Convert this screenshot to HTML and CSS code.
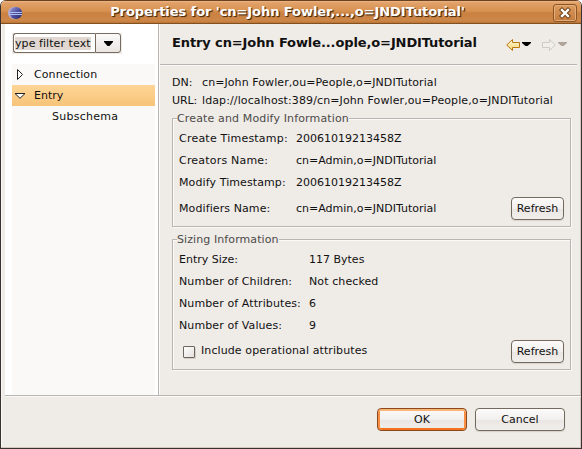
FILE: index.html
```html
<!DOCTYPE html>
<html lang="en">
<head>
<meta charset="utf-8">
<title>Properties</title>
<link rel="stylesheet" href="styles.css">
</head>
<body>
<div class="window">
  <header class="titlebar">
    <svg class="app-icon" width="16" height="16" viewBox="0 0 16 16">
      <defs>
        <linearGradient id="ball" x1="0" y1="0" x2="1" y2="1"><stop offset="0" stop-color="#9a9ad6"/><stop offset=".5" stop-color="#5050a0"/><stop offset="1" stop-color="#292463"/></linearGradient>
      </defs>
      <ellipse cx="7.500" cy="8" rx="6.700" ry="6.200" fill="#b9a6c4"/>
      <ellipse cx="9" cy="8" rx="6.200" ry="6" fill="url(#ball)"/>
      <path d="M2 7.500h13M2 9.500h13" stroke="#a9c0f0"/>
    </svg>
    <h1 class="title">Properties for 'cn=John Fowler,...,o=JNDITutorial'</h1>
    <button class="close" aria-label="Close">
      <svg width="22" height="16" viewBox="0 0 22 16"><path d="M8 5l6 6M14 5l-6 6" stroke="#6d3f16" stroke-width="4.4" stroke-linecap="square"/><path d="M8 5l6 6M14 5l-6 6" stroke="#fff" stroke-width="2.4" stroke-linecap="square"/></svg>
    </button>
  </header>
  <div class="main">
    <aside class="side">
      <div class="combo">
        <div class="entry"><span class="sel">ype filter text</span></div>
        <button class="drop" aria-label="Open"><svg width="9" height="5" viewBox="0 0 9 5"><path d="M0 0h9v1L5.500 5h-2L0 1z"/></svg></button>
      </div>
      <nav class="tree">
        <div class="node"><svg class="exp" width="12" height="14" viewBox="0 0 12 14"><path d="M3.500 1.500v10L8.500 6.500z" fill="#fff" stroke="#222"/></svg><span class="t-conn">Connection</span></div>
        <div class="node on"><svg class="exp" width="12" height="14" viewBox="0 0 12 14"><path d="M1 4.500h10L6 9.300z" fill="#fff" stroke="#222"/></svg><span>Entry</span></div>
        <div class="node child"><span class="t-sub">Subschema</span></div>
      </nav>
    </aside>
    <section class="page">
      <div class="head">
        <h2 class="head-title">Entry cn=John Fowle...ople,o=JNDITutorial</h2>
        <svg class="arrows" width="64" height="14" viewBox="0 0 64 14">
          <defs><linearGradient id="gold" x1="0" y1="0" x2="0" y2="1"><stop offset="0" stop-color="#fffbe0"/><stop offset="1" stop-color="#f5d36a"/></linearGradient></defs>
          <path d="M.7 7L6.500 1.500v3h7v5h-7v3z" fill="url(#gold)" stroke="#b87812"/>
          <path d="M16 4h9v1l-3.500 3h-2L16 5z" fill="#000"/>
          <path d="M49.300 7L43.500 1.500v3h-7v5h7v3z" fill="#f1eeea" stroke="#cfcac5"/>
          <path d="M52 4h9v1l-3.500 3h-2L52 5z" fill="#b0a498"/>
        </svg>
      </div>
      <div class="body">
        <dl class="ids">
          <dt>DN:</dt><dd class="v-dn">cn=John Fowler,ou=People,o=JNDITutorial</dd>
          <dt class="url">URL:</dt><dd class="v-url">ldap://localhost:389/cn=John Fowler,ou=People,o=JNDITutorial</dd>
        </dl>
        <div class="group info">
          <span class="legend l-info">Create and Modify Information</span>
          <div class="row"><span class="k k1">Create Timestamp:</span><span class="v">20061019213458Z</span></div>
          <div class="row"><span class="k k2">Creators Name:</span><span class="v">cn=Admin,o=JNDITutorial</span></div>
          <div class="row"><span class="k k3">Modify Timestamp:</span><span class="v">20061019213458Z</span></div>
          <div class="row tall"><span class="k k3">Modifiers Name:</span><span class="v">cn=Admin,o=JNDITutorial</span><button class="btn small">Refresh</button></div>
        </div>
        <div class="group sizing">
          <span class="legend l-size">Sizing Information</span>
          <div class="row"><span class="k">Entry Size:</span><span class="v">117 Bytes</span></div>
          <div class="row"><span class="k k3">Number of Children:</span><span class="v k3">Not checked</span></div>
          <div class="row"><span class="k k3">Number of Attributes:</span><span class="v">6</span></div>
          <div class="row"><span class="k k3">Number of Values:</span><span class="v">9</span></div>
          <div class="row tall"><span class="check"></span><span class="t-inc">Include operational attributes</span><button class="btn small">Refresh</button></div>
        </div>
      </div>
    </section>
  </div>
  <footer class="foot">
    <button class="btn wide ok">OK</button>
    <button class="btn wide">Cancel</button>
  </footer>
</div>
</body>
</html>
```
FILE: styles.css
```css
* { box-sizing: border-box; margin: 0; padding: 0; }
body { background: #fff; font: 11px/18px "DejaVu Sans", sans-serif; color: #111; white-space: nowrap; overflow: hidden; }
button { font: inherit; color: inherit; }
svg { display: block; flex: none; fill: none; }
.window { width: 582px; height: 449px; background: #efebe7; border: 1px solid #39322f; border-top: 0; border-radius: 6px 6px 0 0; overflow: hidden; box-shadow: inset -1px -1px #d2c8c0, inset 1px 0 #faf8f6; display: flex; flex-direction: column; }
.titlebar { flex: none; height: 24px; display: flex; align-items: center; border-top: 1px solid #6a4220; border-bottom: 1px solid #83501f; background: linear-gradient(#efb581 0, #e0a068 2px, #d9924f 10px, #ca8142 12px, #cc8748 20px, #b97334 22px); padding: 1px 4px 0 6px; }
.app-icon { margin-top: 1px; }
.title { flex: 1; text-align: center; font: bold 13px/22px "DejaVu Sans", sans-serif; letter-spacing: -.07px; color: #fff; text-shadow: 1px 1px 1px #4a2c10, 1px 1px 0 #7a4a20; margin-top: -2px; padding-right: 1px; }
.close { width: 24px; height: 18px; border: 1px solid #8c5525; border-radius: 3px; background: linear-gradient(#dd9c60, #c27b3d); box-shadow: inset 0 0 0 1px #e4ac78; }
.main { height: 372px; display: flex; margin-left: 4px; border-bottom: 1px solid #b9b5b2; box-shadow: 0 1px #fbfaf9; }
.side { width: 154px; background: #fff; border-right: 1px solid #b9b5b2; padding: 9px 3px 0 7px; display: flex; flex-direction: column; }
.combo { width: 110px; height: 21px; display: flex; background: #efebe7; margin-bottom: 10px; padding: 0 1px; flex: none; }
.entry { width: 82px; height: 20px; border: 1px solid #756b60; border-right: 0; border-radius: 3px 0 0 3px; background: #fff; overflow: hidden; padding: 3px 1px; line-height: 13px; }
.sel { display: block; width: 76px; background: #e0d8d1; letter-spacing: .07px; }
.drop { flex: 1; height: 20px; border: 1px solid #756b60; border-radius: 0 3px 3px 0; background: linear-gradient(#fbfaf9, #e9e5e1); display: flex; align-items: center; justify-content: center; }
.drop svg { fill: #000; }
.tree { flex: 1; background: #faf9f7; }
.node { height: 21px; line-height: 21px; display: flex; align-items: center; padding-left: 22px; }
.node.child { padding-left: 40px; }
.exp { margin: 0 8px 0 -20px; }
.node.on { background: linear-gradient(#ffd596, #f6c479); }
.t-conn { letter-spacing: .1px; }
.t-sub { letter-spacing: .25px; }
.page { flex: 1; border-left: 1px solid #fbfaf9; padding-right: 4px; }
.head { height: 41px; border-bottom: 1px solid #b9b5b2; box-shadow: 0 1px #fbfaf9; display: flex; padding: 10px 7px 0 12px; justify-content: space-between; }
.head-title { font: bold 13px/18px "DejaVu Sans", sans-serif; letter-spacing: -.11px; }
.arrows { margin-top: 4px; }
.body { padding: 9px 6px 0 12px; }
.ids { display: grid; grid-template-columns: 30px 1fr; grid-auto-rows: 18px; margin-bottom: 8px; }
.v-dn { letter-spacing: .08px; }
.v-url { letter-spacing: .11px; }
.url { letter-spacing: -.1px; }
.group { width: 399px; position: relative; border: 1px solid #b9b5b2; box-shadow: 1px 1px #fbfaf9, inset 1px 1px #fbfaf9; padding: 9px 6px 0; }
.info { height: 109px; margin-bottom: 12px; }
.sizing { height: 131px; }
.legend { position: absolute; left: 4px; top: -9px; height: 18px; background: #efebe7; color: #4c4a47; }
.l-info { letter-spacing: .14px; }
.l-size { letter-spacing: .09px; }
.row { height: 22px; display: flex; align-items: center; }
.row.tall { height: 30px; }
.row.tall .btn { margin-top: -2px; }
.k { width: 117px; }
.sizing .k { width: 130px; }
.k1 { letter-spacing: .22px; }
.k2 { letter-spacing: .2px; }
.k3 { letter-spacing: .1px; }
.t-inc { letter-spacing: .1px; margin-top: -2px; }
.btn { height: 23px; border: 1px solid #736a5f; border-radius: 4px; background: linear-gradient(#fcfbfa, #f2f0ee 50%, #e9e5e2 52%, #f1efec); box-shadow: 0 1px 1px #d8d2cb; line-height: 20px; padding-top: 1px; text-align: center; }
.small { width: 53px; margin-left: auto; }
.check { width: 12px; height: 12px; margin: 0 6px 0 4px; border: 1px solid #6d655c; border-radius: 1px; background: linear-gradient(135deg, #fff, #e4e0dc); box-shadow: 1px 1px #d5cfc9; }
.foot { flex: 1; display: flex; justify-content: flex-end; gap: 8px; padding: 12px 16px 0 0; position: relative; }
.foot::before { content: ""; position: absolute; left: 4px; right: 4px; top: 0; height: 1px; background: #fbfaf9; }
.wide { width: 90px; }
.ok { border-color: #8a4a1c; box-shadow: inset 0 2px #fbb577, inset 2px 0 #f98f45, inset -2px 0 #f98f45, inset 0 -2px #f5711d; }
```
